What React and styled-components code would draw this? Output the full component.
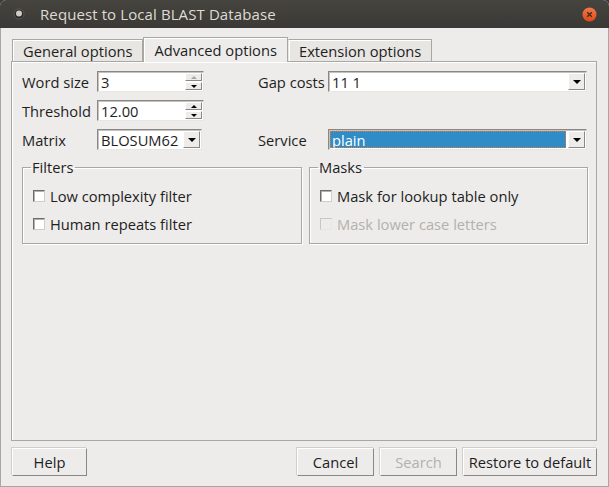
import React from "react";
import styled, { createGlobalStyle } from "styled-components";

const GlobalStyle = createGlobalStyle`
  html, body {
    margin: 0;
    padding: 0;
    overflow: hidden;
    background: #3c3b37;
  }
  * {
    box-sizing: border-box;
  }
`;

const FONT = `"Open Sans", "DejaVu Sans", sans-serif`;

const Window = styled.div`
  width: 609px;
  height: 487px;
  display: flex;
  flex-direction: column;
  font-family: ${FONT};
  font-size: 14.7px;
  color: #1e1e1e;
  background: #edecea;
  border-radius: 6px 6px 0 0;
  overflow: hidden;
`;

const TitleBar = styled.div`
  height: 28px;
  flex: none;
  display: flex;
  align-items: center;
  padding: 0 12px 0 13px;
  gap: 15px;
  background: linear-gradient(#45443f, #3a3935);
  color: #dfdbd2;
  font-size: 15px;
`;

const TitleText = styled.span`
  flex: 1;
  letter-spacing: 0.1px;
`;

const Body = styled.div`
  flex: 1;
  display: flex;
  flex-direction: column;
  padding: 8px 11px 10px 10px;
  border-left: 1px solid #a9a7a3;
  border-right: 1px solid #a9a7a3;
  border-bottom: 1px solid #a9a7a3;
`;

const TabBar = styled.div`
  display: flex;
  align-items: flex-end;
  padding-left: 1px;
  height: 25px;
`;

const Tab = styled.div`
  height: ${(p) => (p.$active ? "25px" : "22px")};
  padding: 0 10px;
  display: flex;
  align-items: center;
  background: ${(p) => (p.$active ? "#edecea" : "#e8e6e3")};
  border: 1px solid #a9a7a3;
  border-bottom: none;
  border-left-color: ${(p) => (p.$first || p.$active ? "#a9a7a3" : "transparent")};
  box-shadow: inset 1px 1px 0 #ffffff;
  margin-bottom: ${(p) => (p.$active ? "-1px" : "0")};
  position: relative;
  z-index: ${(p) => (p.$active ? 1 : 0)};
  white-space: nowrap;
`;

const Pane = styled.div`
  flex: 1;
  border: 1px solid #a9a7a3;
  box-shadow: inset 1px 1px 0 #ffffff;
  padding: 9px 10px 0 10px;
  display: flex;
  flex-direction: column;
  gap: 7px;
`;

const FormGrid = styled.div`
  display: grid;
  grid-template-columns: 75px 107px 54px 70px 259px;
  grid-auto-rows: 21px;
  row-gap: 8px;
  align-items: center;
`;

const Label = styled.span`
  grid-column: ${(p) => p.$col};
  white-space: nowrap;
`;

const Field = styled.div`
  grid-column: ${(p) => p.$col};
  height: 21px;
  display: flex;
  background: #ffffff;
  border: 1px solid;
  border-color: #8a8885 #e8e6e3 #e8e6e3 #8a8885;
  box-shadow: inset 1px 1px 0 #c4c2bf;
  padding: 1px;
  width: ${(p) => p.$w || "auto"};
`;

const FieldText = styled.div`
  flex: 1;
  display: flex;
  align-items: center;
  padding-left: 2px;
  color: ${(p) => (p.$selected ? "#ffffff" : "#1e1e1e")};
  background: ${(p) => (p.$selected ? "#308cc6" : "transparent")};
  outline: ${(p) => (p.$selected ? "1px dotted #e8782a" : "none")};
  outline-offset: -1px;
  margin-right: ${(p) => (p.$selected ? "2px" : "0")};
`;

const SpinButtons = styled.div`
  width: 17px;
  display: flex;
  flex-direction: column;
  gap: 1px;
`;

const RaisedButton = styled.div`
  flex: 1;
  width: ${(p) => p.$w || "auto"};
  background: #edecea;
  border: 1px solid;
  border-color: #ffffff #8a8885 #8a8885 #ffffff;
  display: flex;
  align-items: center;
  justify-content: center;
`;

const Arrow = styled.div`
  width: 0;
  height: 0;
  border-left: ${(p) => p.$size}px solid transparent;
  border-right: ${(p) => p.$size}px solid transparent;
  ${(p) => (p.$up ? "border-bottom" : "border-top")}: ${(p) => p.$size}px solid
    ${(p) => (p.$disabled ? "#a9a7a3" : "#000000")};
`;

const Spin = ({ value, col, upDisabled }) => (
  <Field $col={col}>
    <FieldText>{value}</FieldText>
    <SpinButtons>
      <RaisedButton>
        <Arrow $up $size={3} $disabled={upDisabled} />
      </RaisedButton>
      <RaisedButton>
        <Arrow $size={3} />
      </RaisedButton>
    </SpinButtons>
  </Field>
);

const Combo = ({ value, col, w, selected }) => (
  <Field $col={col} $w={w}>
    <FieldText $selected={selected}>{value}</FieldText>
    <RaisedButton $w="17px" style={{ flex: "none" }}>
      <Arrow $size={4} />
    </RaisedButton>
  </Field>
);

const Groups = styled.div`
  display: grid;
  grid-template-columns: 280px 279px;
  column-gap: 7px;
`;

const Group = styled.fieldset`
  margin: 0;
  height: 87px;
  padding: 8px 0 0 10px;
  border: 1px solid #a9a7a3;
  box-shadow: inset 1px 1px 0 #ffffff, 1px 1px 0 #ffffff;
  display: flex;
  flex-direction: column;
  gap: 7px;
`;

const Legend = styled.legend`
  padding: 0 2px 0 1px;
  margin-left: -2px;
`;

const CheckRow = styled.label`
  display: flex;
  align-items: center;
  gap: 5px;
  height: 21px;
  color: ${(p) => (p.$disabled ? "#b3b1ad" : "#1e1e1e")};
`;

const Box = styled.span`
  width: 12px;
  height: 12px;
  background: ${(p) => (p.$disabled ? "#edecea" : "#ffffff")};
  border: 1px solid;
  border-color: ${(p) =>
    p.$disabled ? "#c9c7c3 #e8e6e3 #e8e6e3 #c9c7c3" : "#6e6c69 #d0cecb #d0cecb #6e6c69"};
  box-shadow: ${(p) => (p.$disabled ? "none" : "inset 1px 1px 0 #b4b2ae")};
  flex: none;
`;

const Footer = styled.div`
  display: flex;
  gap: 6px;
  padding-top: 7px;
  padding-left: 1px;
`;

const PushButton = styled.div`
  width: ${(p) => p.$w}px;
  height: 28px;
  display: flex;
  align-items: center;
  justify-content: center;
  background: #edecea;
  border: 1px solid;
  border-color: #ffffff #8a8885 #8a8885 #ffffff;
  box-shadow: -1px -1px 0 #d0cecb;
  color: ${(p) => (p.$disabled ? "#b3b1ad" : "#1e1e1e")};
  white-space: nowrap;
`;

const Spacer = styled.div`
  flex: 1;
`;

const Check = ({ label, disabled }) => (
  <CheckRow $disabled={disabled}>
    <Box $disabled={disabled} />
    {label}
  </CheckRow>
);

const AppIcon = () => (
  <svg width="12" height="12" viewBox="0 0 12 12">
    <circle cx="6" cy="6" r="5" fill="#2c2b28" stroke="#5a5954" strokeWidth="1" />
    <circle cx="6" cy="5.5" r="3" fill="#cfcbc2" />
  </svg>
);

const CloseIcon = () => (
  <svg width="15" height="15" viewBox="0 0 15 15">
    <defs>
      <linearGradient id="cg" x1="0" y1="0" x2="0" y2="1">
        <stop offset="0" stopColor="#f5784a" />
        <stop offset="1" stopColor="#df4a16" />
      </linearGradient>
    </defs>
    <circle cx="7.5" cy="7.5" r="7" fill="url(#cg)" />
    <path d="M5.2 5.2 L9.8 9.8 M9.8 5.2 L5.2 9.8" stroke="#3c2a22" strokeWidth="1.3" />
  </svg>
);

const App = () => {
  return (
    <>
      <GlobalStyle />
      <Window>
        <TitleBar>
          <AppIcon />
          <TitleText>Request to Local BLAST Database</TitleText>
          <CloseIcon />
        </TitleBar>
        <Body>
          <TabBar>
            <Tab $first>General options</Tab>
            <Tab $active>Advanced options</Tab>
            <Tab>Extension options</Tab>
          </TabBar>
          <Pane>
            <FormGrid>
              <Label $col={1}>Word size</Label>
              <Spin col={2} value="3" upDisabled />
              <Label $col={4}>Gap costs</Label>
              <Combo col={5} value="11 1" />

              <Label $col={1}>Threshold</Label>
              <Spin col={2} value="12.00" />

              <Label $col={1}>Matrix</Label>
              <Combo col={2} w="105px" value="BLOSUM62" />
              <Label $col={4}>Service</Label>
              <Combo col={5} value="plain" selected />
            </FormGrid>
            <Groups>
              <Group>
                <Legend>Filters</Legend>
                <Check label="Low complexity filter" />
                <Check label="Human repeats filter" />
              </Group>
              <Group>
                <Legend>Masks</Legend>
                <Check label="Mask for lookup table only" />
                <Check label="Mask lower case letters" disabled />
              </Group>
            </Groups>
          </Pane>
          <Footer>
            <PushButton $w={75}>Help</PushButton>
            <Spacer />
            <PushButton $w={77}>Cancel</PushButton>
            <PushButton $w={77} $disabled>
              Search
            </PushButton>
            <PushButton $w={134}>Restore to default</PushButton>
          </Footer>
        </Body>
      </Window>
    </>
  );
};

export default App;
